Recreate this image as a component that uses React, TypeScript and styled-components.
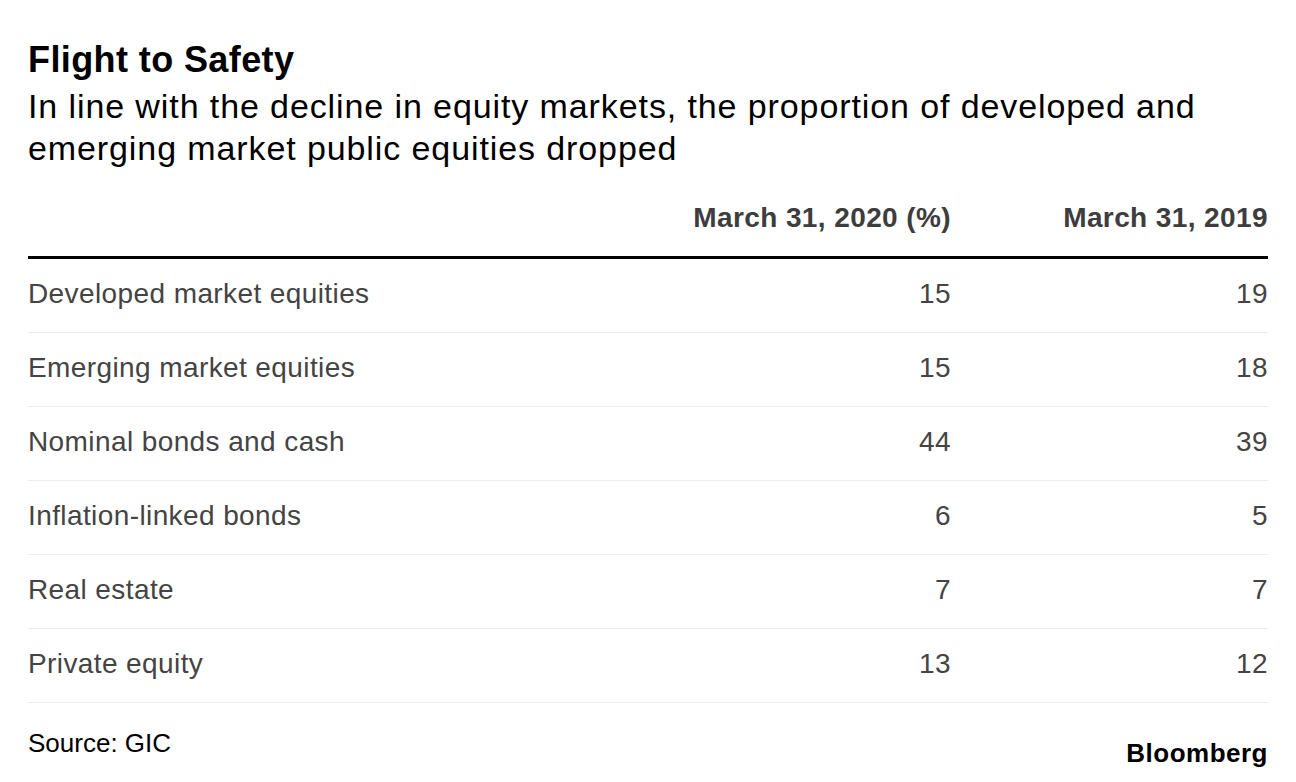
import React from "react";
import styled, { createGlobalStyle } from "styled-components";

const GlobalStyle = createGlobalStyle`
  html, body {
    margin: 0;
    padding: 0;
    background: #ffffff;
  }
  body {
    font-family: "Liberation Sans", Arial, Helvetica, sans-serif;
    -webkit-font-smoothing: antialiased;
  }
`;

const Page = styled.main`
  width: 1296px;
  height: 782px;
  box-sizing: border-box;
  padding: 40px 28px 0 28px;
  background: #fff;
  display: flex;
  flex-direction: column;
`;

const Title = styled.h1`
  margin: 0;
  font-size: 36px;
  line-height: 40px;
  font-weight: 700;
  letter-spacing: 0.4px;
  color: #000;
`;

const Subtitle = styled.p`
  margin: 5px 0 0 0;
  font-size: 34px;
  line-height: 42px;
  font-weight: 400;
  letter-spacing: 0.9px;
  color: #000;
`;

const Table = styled.div`
  margin-top: 33px;
  display: grid;
  grid-template-columns: 1fr 300px 317px;
`;

const Row = styled.div`
  display: contents;
`;

const Cell = styled.div<{ $num?: boolean; $head?: boolean }>`
  text-align: ${(p) => (p.$num ? "right" : "left")};
  font-size: 28px;
  letter-spacing: ${(p) => (p.$head ? "0.4px" : "0.4px")};
  font-weight: ${(p) => (p.$head ? 700 : 400)};
  color: ${(p) => (p.$head ? "#3d3d3d" : "#444444")};
  line-height: ${(p) => (p.$head ? "32px" : "33px")};
  padding: ${(p) => (p.$head ? "0 0 22px 0" : "18px 0 22px 0")};
  border-bottom: ${(p) => (p.$head ? "3px solid #000" : "1px solid #ececec")};
`;

const Footer = styled.footer`
  margin-top: 25px;
  display: flex;
  justify-content: space-between;
  align-items: flex-start;
`;

const Source = styled.span`
  font-size: 26px;
  line-height: 30px;
  color: #000;
`;

const Logo = styled.span`
  margin-top: 10px;
  font-size: 26px;
  line-height: 30px;
  font-weight: 700;
  letter-spacing: 0.5px;
  color: #000;
`;

const rows: [string, string, string][] = [
  ["Developed market equities", "15", "19"],
  ["Emerging market equities", "15", "18"],
  ["Nominal bonds and cash", "44", "39"],
  ["Inflation-linked bonds", "6", "5"],
  ["Real estate", "7", "7"],
  ["Private equity", "13", "12"],
];

export default function App() {
  return (
    <>
      <GlobalStyle />
      <Page>
        <Title>Flight to Safety</Title>
        <Subtitle>
          In line with the decline in equity markets, the proportion of developed and
          <br />
          emerging market public equities dropped
        </Subtitle>
        <Table>
          <Row>
            <Cell $head></Cell>
            <Cell $head $num>
              March 31, 2020 (%)
            </Cell>
            <Cell $head $num>
              March 31, 2019
            </Cell>
          </Row>
          {rows.map(([label, a, b]) => (
            <Row key={label}>
              <Cell>{label}</Cell>
              <Cell $num>{a}</Cell>
              <Cell $num>{b}</Cell>
            </Row>
          ))}
        </Table>
        <Footer>
          <Source>Source: GIC</Source>
          <Logo>Bloomberg</Logo>
        </Footer>
      </Page>
    </>
  );
}
